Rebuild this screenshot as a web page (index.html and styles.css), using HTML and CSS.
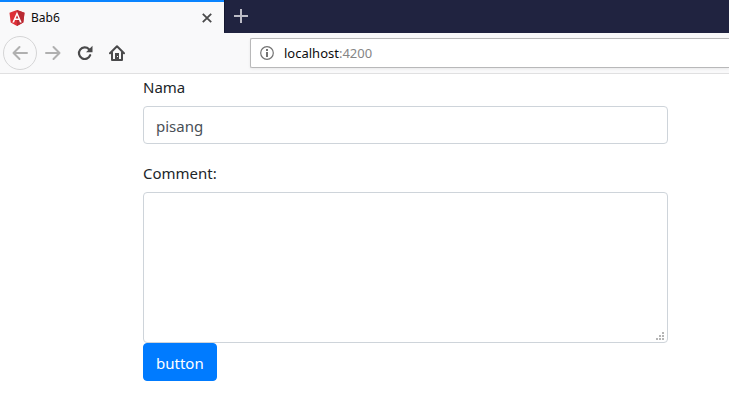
FILE: index.html
```html
<!DOCTYPE html>
<html lang="id">
<head>
<meta charset="utf-8">
<meta name="viewport" content="width=device-width, initial-scale=1">
<title>Bab6</title>
<link rel="stylesheet" href="styles.css">
</head>
<body>
<header class="browser">
  <div class="tabstrip">
    <div class="tab">
      <svg class="favicon" width="16" height="16" viewBox="0 0 16 16" aria-hidden="true">
        <path fill="#dd3037" d="M8 0 15.5 2.7 14.3 12.5 8 16 1.7 12.5.5 2.7z"/>
        <path fill="#b92a33" d="M8 0 15.5 2.7 14.3 12.5 8 16z"/>
        <path fill="#fff" fill-rule="evenodd" d="M8 1.8 12.7 12.4H10.9L10 10.1H6L5.1 12.4H3.3zM8 5.3 6.6 8.6H9.4z"/>
      </svg>
      <span class="tab-title">Bab6</span>
      <button class="icon-button close" type="button" aria-label="Close tab">
        <svg width="10" height="10" viewBox="0 0 10 10"><path d="M.8.8 9.2 9.2M9.2.8.8 9.2" stroke="#4a4a4b" stroke-width="1.8"/></svg>
      </button>
    </div>
    <button class="icon-button new-tab" type="button" aria-label="New tab">
      <svg width="14" height="14" viewBox="0 0 14 14"><path d="M7 0V14M0 7H14" stroke="#bcbcc6" stroke-width="2"/></svg>
    </button>
  </div>
  <nav class="toolbar" aria-label="Navigation">
    <button class="icon-button back" type="button" aria-label="Back">
      <svg width="16" height="16" viewBox="0 0 16 16" fill="none" stroke="#b0b0b0" stroke-width="2" stroke-linecap="round" stroke-linejoin="round"><path d="M15 8H1.5M7.5 2 1.5 8 7.5 14"/></svg>
    </button>
    <button class="icon-button tool" type="button" aria-label="Forward">
      <svg width="16" height="16" viewBox="0 0 16 16" fill="none" stroke="#b0b0b0" stroke-width="2" stroke-linecap="round" stroke-linejoin="round"><path d="M1 8H14.5M8.5 2 14.5 8 8.5 14"/></svg>
    </button>
    <button class="icon-button tool" type="button" aria-label="Reload">
      <svg width="16" height="16" viewBox="0 0 16 16"><path d="M13.2 10.2A5.8 5.8 0 1 1 12 4.2" fill="none" stroke="#4a4a4b" stroke-width="2.2" stroke-linecap="round"/><path d="M15.5.8V7.3H9z" fill="#4a4a4b"/></svg>
    </button>
    <button class="icon-button tool" type="button" aria-label="Home">
      <svg width="16" height="16" viewBox="0 0 16 16"><path d="M1 8.3 8 1.3 15 8.3M3 7.5V15H13V7.5" fill="none" stroke="#4a4a4b" stroke-width="2" stroke-linecap="round" stroke-linejoin="round"/><path d="M6 8H10V15H6z" fill="#4a4a4b"/><path d="M8 11H9V12H8z" fill="#f9f9fa"/></svg>
    </button>
    <div class="address">
      <svg width="14" height="14" viewBox="0 0 14 14" aria-hidden="true"><circle cx="7" cy="7" r="6.3" fill="none" stroke="#737373" stroke-width="1.2"/><path d="M6 6H8V11H6zM6 3H8V5H6z" fill="#737373"/></svg>
      <a class="url" href="#">localhost<span class="port">:4200</span></a>
    </div>
  </nav>
</header>
<main class="page">
  <form>
    <div class="form-group">
      <label for="nama">Nama</label>
      <input class="form-control" id="nama" type="text" value="pisang">
    </div>
    <div class="form-group">
      <label for="comment">Comment:</label>
      <div class="textarea-wrap">
        <textarea class="form-control area" id="comment"></textarea>
        <svg class="grip" width="8" height="8" viewBox="0 0 8 8" aria-hidden="true"><path fill="#b5b5b5" d="M6 0h2v2H6zM3 3h2v2H3zM6 3h2v2H6zM0 6h2v2H0zM3 6h2v2H3zM6 6h2v2H6z"/></svg>
      </div>
    </div>
    <button class="btn" type="button">button</button>
  </form>
</main>
</body>
</html>
```

FILE: styles.css
```css
* {
  box-sizing: border-box;
}

body {
  margin: 0;
  background: #fff;
  color: #212529;
  font: 15px/24px "Noto Sans", sans-serif;
}

svg {
  display: block;
  flex: none;
}

.icon-button {
  display: flex;
  align-items: center;
  justify-content: center;
  flex: none;
  padding: 0;
  border: 0;
  background: none;
}

.tabstrip {
  display: flex;
  height: 33px;
  background: #202340;
}

.tab {
  display: flex;
  align-items: center;
  width: 224px;
  padding: 0 8px 0 9px;
  border-top: 2px solid #0a84ff;
  background: #f9f9fa;
  color: #0c0c0d;
  font-size: 12px;
}

.tab-title {
  flex: 1;
  margin-left: 6px;
}

.close {
  width: 18px;
  height: 18px;
}

.new-tab {
  width: 33px;
  height: 32px;
  border-left: 1px solid #14172f;
}

.toolbar {
  display: flex;
  align-items: center;
  height: 41px;
  padding-left: 3px;
  border-bottom: 1px solid #e0e0e1;
  background: #f9f9fa;
}

.back {
  width: 34px;
  height: 34px;
  border: 1px solid #d5d5d6;
  border-radius: 50%;
}

.tool {
  width: 32px;
  height: 32px;
}

.address {
  display: flex;
  align-items: center;
  flex: 1;
  gap: 10px;
  height: 30px;
  margin-left: 117px;
  padding-left: 9px;
  border: 1px solid #b8b8b9;
  border-right: 0;
  border-radius: 2px 0 0 2px;
  background: #fff;
  box-shadow: 0 1px 3px rgba(0, 0, 0, 0.07);
}

.url {
  color: #0c0c0d;
  font-size: 13px;
  text-decoration: none;
}

.port {
  color: #858585;
}

.page {
  padding: 0 61px 24px 143px;
}

.form-group + .form-group {
  margin-top: 16px;
}

label {
  display: block;
  margin-bottom: 6px;
  line-height: 26px;
}

.form-control {
  display: block;
  width: 100%;
  height: 38px;
  padding: 7px 12px 5px;
  border: 1px solid #ced4da;
  border-radius: 4px;
  background: #fff;
  color: #495057;
  font: inherit;
}

.textarea-wrap {
  position: relative;
}

.area {
  height: 151px;
  resize: none;
}

.grip {
  position: absolute;
  right: 4px;
  bottom: 3px;
}

.btn {
  display: block;
  height: 38px;
  padding: 7px 12px 5px;
  border: 1px solid #007bff;
  border-radius: 4px;
  background: #007bff;
  color: #fff;
  font: inherit;
}
```
